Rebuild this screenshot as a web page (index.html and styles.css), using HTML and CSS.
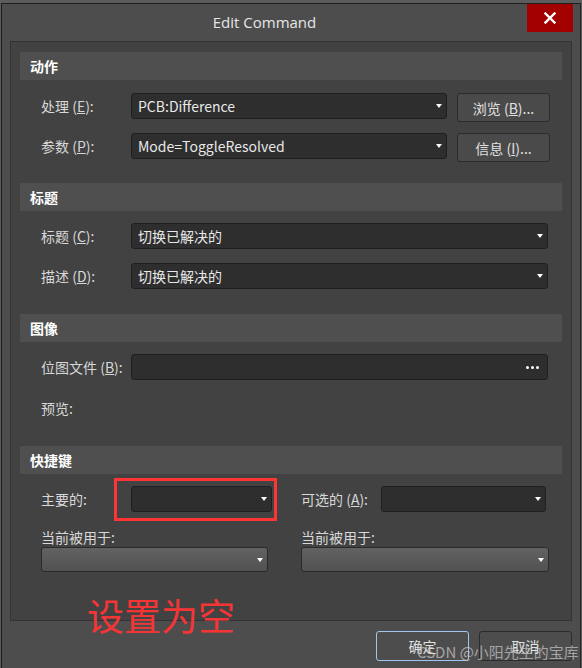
FILE: index.html
```html
<!DOCTYPE html>
<html lang="zh-CN">
<head>
<meta charset="utf-8">
<title>Edit Command</title>
<link rel="stylesheet" href="styles.css">
</head>
<body>
<div class="window">
  <div class="titlebar">
    <div class="title">Edit Command</div>
    <button class="close" aria-label="关闭">
      <svg width="12" height="12" viewBox="0 0 12 12"><path d="M1.5 1.5 L10.5 10.5 M10.5 1.5 L1.5 10.5" stroke="#fff" stroke-width="2.4" stroke-linecap="square"/></svg>
    </button>
  </div>

  <div class="panel">
    <section class="sec sec-action">
      <div class="sec-head">动作</div>
      <div class="sec-body grid-action">
        <label class="lbl">处理 (<u>E</u>):</label>
        <div class="combo">PCB:Difference<span class="arrow"></span></div>
        <button class="btn">浏览 (<u>B</u>)...</button>
        <label class="lbl">参数 (<u>P</u>):</label>
        <div class="combo">Mode=ToggleResolved<span class="arrow"></span></div>
        <button class="btn">信息 (<u>I</u>)...</button>
      </div>
    </section>

    <section class="sec sec-title">
      <div class="sec-head">标题</div>
      <div class="sec-body grid-wide">
        <label class="lbl">标题 (<u>C</u>):</label>
        <div class="combo">切换已解决的<span class="arrow"></span></div>
        <label class="lbl">描述 (<u>D</u>):</label>
        <div class="combo">切换已解决的<span class="arrow"></span></div>
      </div>
    </section>

    <section class="sec sec-image">
      <div class="sec-head">图像</div>
      <div class="sec-body grid-image">
        <label class="lbl">位图文件 (<u>B</u>):</label>
        <div class="combo"><span class="dots"><i></i><i></i><i></i></span></div>
        <label class="lbl preview">预览:</label>
      </div>
    </section>

    <section class="sec sec-keys">
      <div class="sec-head">快捷键</div>
      <div class="sec-body grid-keys">
        <label class="lbl">主要的:</label>
        <div class="combo primary"><span class="arrow"></span><span class="highlight"></span></div>
        <label class="lbl alt-lbl">可选的 (<u>A</u>):</label>
        <div class="combo alt"><span class="arrow"></span></div>
        <label class="lbl used used1">当前被用于:</label>
        <label class="lbl used used2">当前被用于:</label>
        <div class="combo light used-c1"><span class="arrow"></span></div>
        <div class="combo light used-c2"><span class="arrow"></span></div>
      </div>
    </section>
  </div>

  <div class="footer">
    <button class="btn fbtn ok">确定</button>
    <button class="btn fbtn">取消</button>
  </div>

  <div class="annotation">设置为空</div>
  <div class="watermark">CSDN @小阳先生的宝库</div>
</div>
</body>
</html>
```

FILE: styles.css
```css
* { box-sizing: border-box; }

html, body {
  margin: 0;
  padding: 0;
}

body {
  width: 582px;
  height: 668px;
  overflow: hidden;
  background: #5c5c5c;
  font-family: "Noto Sans CJK SC", "Noto Sans", sans-serif;
  font-size: 14px;
  color: #dcdcdc;
}

.window {
  position: relative;
  margin: 3px 0 0 1px;
  width: 580px;
  height: 670px;
  background: #4d4d4d;
  border-left: 1px solid #1e1e1e;
  border-top: 1px solid #1e1e1e;
  border-right: 1px solid #262626;
}

.titlebar {
  height: 37px;
  display: flex;
  align-items: flex-start;
}

.title {
  flex: 1;
  text-align: center;
  line-height: 36px;
  font-family: "Open Sans", "Noto Sans", sans-serif;
  font-size: 15px;
  color: #e6e6e6;
}

.close {
  width: 46px;
  height: 28px;
  margin-right: 7px;
  border: 0;
  padding: 0;
  background: #a30000;
  display: flex;
  align-items: center;
  justify-content: center;
}

.panel {
  margin: 0 8px 0 8px;
  background: #424242;
  border: 1px solid #333333;
  padding: 10px 9px 48px 9px;
}

.sec-head {
  height: 28px;
  line-height: 28px;
  background: #4f4f4f;
  padding-left: 10px;
  font-weight: bold;
  color: #ffffff;
  font-size: 14px;
}

.sec-body {
  padding-left: 21px;
  display: grid;
  align-items: start;
}

.lbl {
  line-height: 26px;
  color: #d8d8d8;
  white-space: nowrap;
}

.combo {
  position: relative;
  height: 26px;
  line-height: 25px;
  padding-left: 6px;
  background: #2e2e2e;
  border: 1px solid #1f1f1f;
  border-radius: 3px;
  color: #e8e8e8;
  white-space: nowrap;
}

.arrow {
  position: absolute;
  right: 4px;
  top: 50%;
  margin-top: -2px;
  width: 0;
  height: 0;
  border-left: 3.5px solid transparent;
  border-right: 3.5px solid transparent;
  border-top: 4px solid #ffffff;
}

.dots {
  position: absolute;
  right: 8px;
  top: 11px;
  display: flex;
  gap: 2px;
}
.dots i {
  display: block;
  width: 3px;
  height: 3px;
  border-radius: 50%;
  background: #ffffff;
}

.btn {
  font-family: inherit;
  font-size: 14px;
  color: #e0e0e0;
  background: #4a4a4a;
  border: 1px solid #2b2b2b;
  border-radius: 3px;
  padding: 0;
  height: 29px;
}

/* Section 1 */
.sec-action .sec-body {
  padding-top: 13px;
  grid-template-columns: 90px 316px 103px;
  row-gap: 11px;
}
.sec-action .btn { margin-left: 10px; width: 93px; }
.sec-action { margin-bottom: 21px; }

/* Section 2 */
.grid-wide {
  padding-top: 12px;
  grid-template-columns: 90px 417px;
  row-gap: 14px;
}
.sec-title { margin-bottom: 25px; }

/* Section 3 */
.grid-image {
  padding-top: 12px;
  grid-template-columns: 90px 417px;
  row-gap: 18px;
}
.preview { line-height: 20px; grid-column: 1 / 3; }
.sec-image { margin-bottom: 28px; }

/* Section 4 */
.grid-keys {
  padding-top: 12px;
  grid-template-columns: 90px 141px 29px 80px 168px;
  grid-template-rows: 26px 16px 18px 1px 25px;
}
.grid-keys .primary { grid-column: 2; grid-row: 1; }
.grid-keys .alt-lbl { grid-column: 4; grid-row: 1; }
.grid-keys .alt { grid-column: 5; grid-row: 1; width: 165px; }
.grid-keys .used { line-height: 18px; grid-row: 3; }
.grid-keys .used1 { grid-column: 1 / 3; }
.grid-keys .used2 { grid-column: 4 / 6; }
.grid-keys .light {
  height: 25px;
  grid-row: 5;
  background: linear-gradient(#626262, #515151);
  border-color: #2a2a2a;
}
.grid-keys .used-c1 { grid-column: 1 / 3; width: 227px; }
.grid-keys .used-c2 { grid-column: 4 / 6; width: 248px; }

.highlight {
  position: absolute;
  left: -18px;
  right: -6px;
  top: -9px;
  bottom: -10px;
  border: 3px solid #ff3434;
}

/* Footer */
.footer {
  display: flex;
  justify-content: flex-end;
  gap: 10px;
  margin: 10px 8px 0 0;
}
.fbtn {
  width: 93px;
  height: 30px;
  background: #4d4d4d;
}
.fbtn.ok { border-color: #9ec6ee; }

.annotation {
  position: absolute;
  left: 85px;
  top: 587px;
  font-size: 37px;
  line-height: 48px;
  color: #f43535;
  white-space: nowrap;
}

.watermark {
  position: absolute;
  left: 415px;
  top: 636px;
  font-size: 15px;
  line-height: 24px;
  color: rgba(205, 205, 205, 0.7);
  white-space: nowrap;
}
```
